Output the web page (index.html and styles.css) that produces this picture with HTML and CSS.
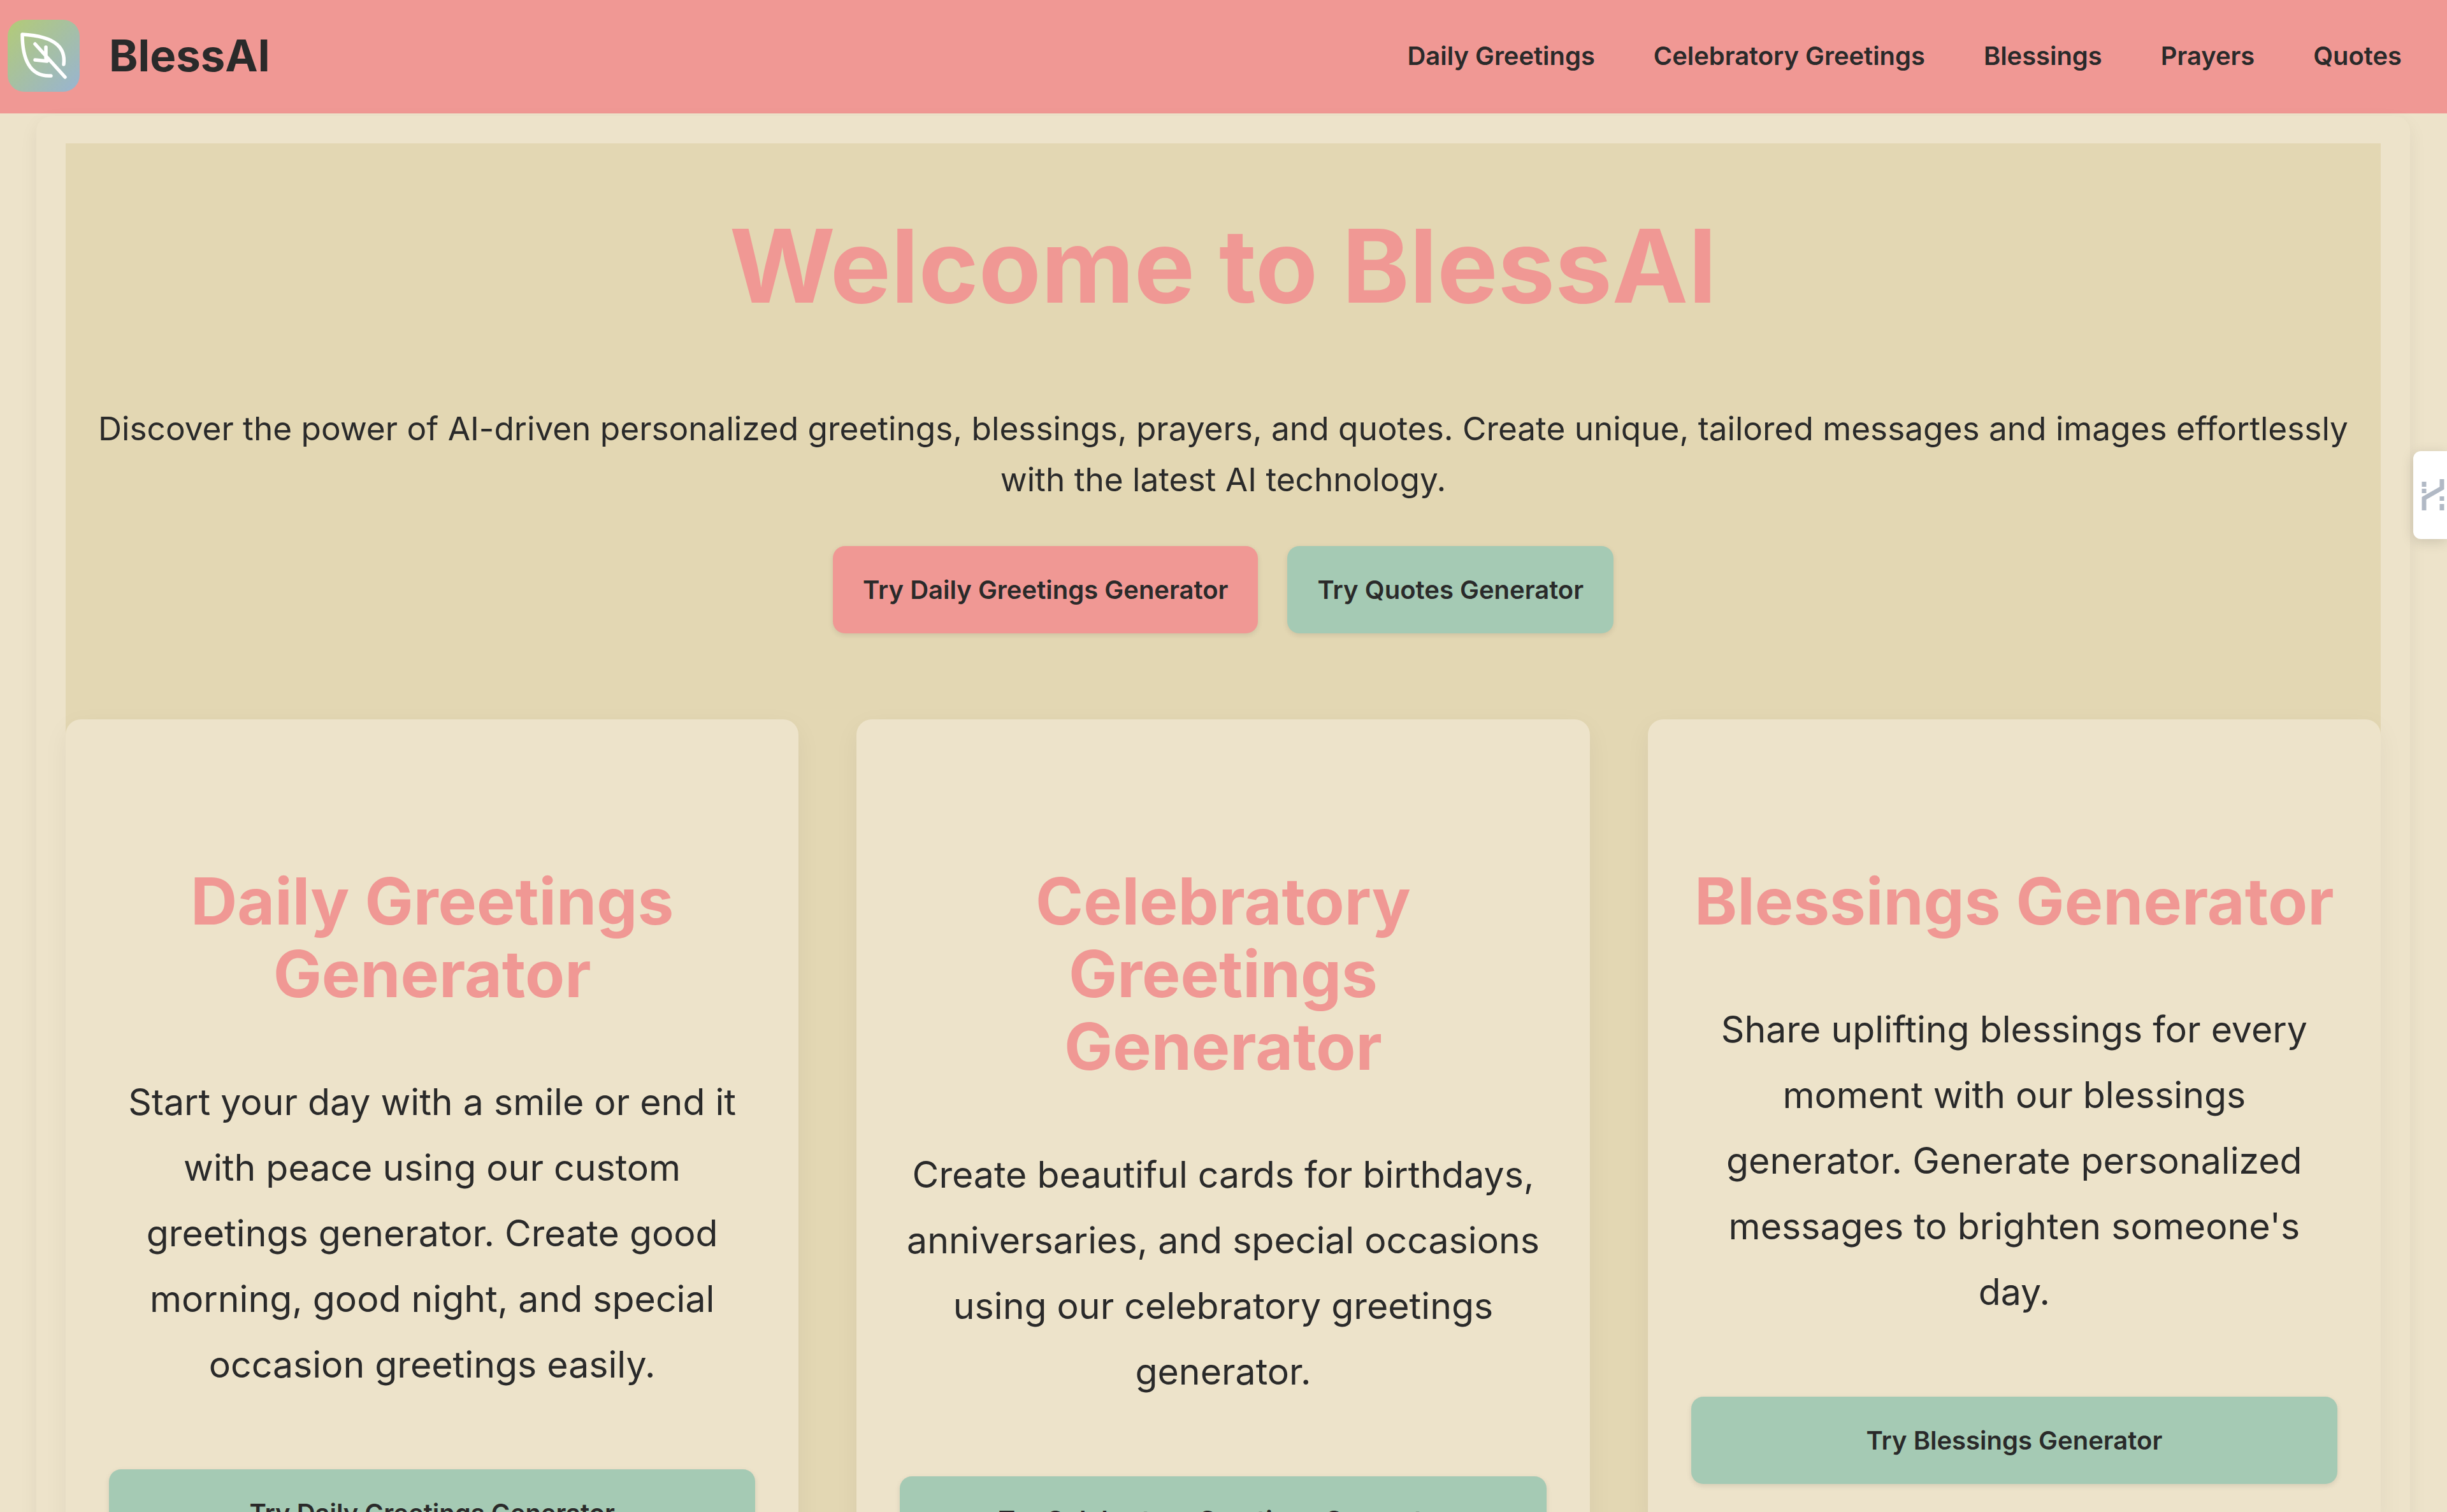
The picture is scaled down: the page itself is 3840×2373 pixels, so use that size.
FILE: index.html
```html
<!DOCTYPE html>
<html lang="en">
<head>
  <meta charset="UTF-8">
  <title>BlessAI</title>
  <link rel="stylesheet" href="styles.css">
</head>
<body>

<header class="top-bar">
  <a href="#" class="brand">
    <svg class="brand-logo" viewBox="0 0 113 113">
      <defs>
        <linearGradient id="logoFill" x1="0" y1="0" x2="1" y2="1">
          <stop offset="0" stop-color="#b3cb76"/>
          <stop offset="1" stop-color="#98b4d2"/>
        </linearGradient>
      </defs>
      <rect width="113" height="113" rx="26" fill="url(#logoFill)"/>
      <g fill="none" stroke="#fff" stroke-width="5.5" stroke-linecap="round" stroke-linejoin="round">
        <path d="M88 70C91 46 78 26 23 23C23 60 34 90 68 88"/>
        <path d="M43 38L90 90M60 43V60M43 63L62 65"/>
      </g>
    </svg>
    <span class="brand-name">BlessAI</span>
  </a>
  <nav class="top-nav">
    <a href="#">Daily Greetings</a>
    <a href="#">Celebratory Greetings</a>
    <a href="#">Blessings</a>
    <a href="#">Prayers</a>
    <a href="#">Quotes</a>
  </nav>
</header>

<main class="page">
  <div class="panel">
    <section class="hero">
      <h1>Welcome to BlessAI</h1>
      <p>Discover the power of AI-driven personalized greetings, blessings, prayers, and quotes. Create unique, tailored messages and images effortlessly with the latest AI technology.</p>
      <div class="hero-buttons">
        <a href="#" class="btn btn-pink">Try Daily Greetings Generator</a>
        <a href="#" class="btn btn-green">Try Quotes Generator</a>
      </div>
    </section>

    <section class="cards">
      <article class="card">
        <h2>Daily Greetings Generator</h2>
        <p>Start your day with a smile or end it with peace using our custom greetings generator. Create good morning, good night, and special occasion greetings easily.</p>
        <a href="#" class="btn btn-green btn-full">Try Daily Greetings Generator</a>
      </article>
      <article class="card">
        <h2>Celebratory<br>Greetings<br>Generator</h2>
        <p>Create beautiful cards for birthdays, anniversaries, and special occasions using our celebratory greetings generator.</p>
        <a href="#" class="btn btn-green btn-full">Try Celebratory Greetings Generator</a>
      </article>
      <article class="card">
        <h2>Blessings Generator</h2>
        <p>Share uplifting blessings for every moment with our blessings generator. Generate personalized messages to brighten someone's day.</p>
        <a href="#" class="btn btn-green btn-full">Try Blessings Generator</a>
      </article>
    </section>
  </div>
</main>

<!-- floating tab on the right edge -->
<div class="side-tab">
  <svg class="side-tab-icon" viewBox="0 0 40 50">
    <g fill="none" stroke="#b1b9c5" stroke-width="7">
      <path d="M4 4V12M4 15V22"/>
      <path d="M4 49V30L32 14V0"/>
      <path d="M32 27V34M32 39V49"/>
    </g>
  </svg>
</div>

</body>
</html>
```

FILE: styles.css
```css
html, body {
  margin: 0;
  height: 100%;
  overflow: hidden;
}

body {
  font-family: "Inter", "Liberation Sans", sans-serif;
  background-color: #ede3ca;
  color: #2a2a2a;
}

a {
  color: inherit;
  text-decoration: none;
}

.top-bar {
  display: flex;
  align-items: center;
  justify-content: space-between;
  height: 178px;
  box-sizing: border-box;
  padding: 0 71px 4px 12px;
  background-color: #f09894;
}

.brand {
  display: flex;
  align-items: center;
  gap: 46px;
}

.brand-logo {
  width: 113px;
  height: 113px;
}

.brand-name {
  font-size: 68.8px;
  font-weight: 700;
}

.top-nav {
  display: flex;
  gap: 92px;
  font-size: 39.9px;
  font-weight: 600;
}

.page {
  margin: 4px 58px 0 57px;
  padding: 43px 46px 0;
  border-radius: 24px;
  background-color: #ede3ca;
  box-shadow: 0 10px 30px rgba(0, 0, 0, 0.06);
}

.panel {
  background-color: #e3d7b3;
}

.hero {
  padding: 112px 46px 135px;
  text-align: center;
}

.hero h1 {
  margin: 0;
  font-size: 160px;
  line-height: 1;
  font-weight: 700;
  color: #f09894;
}

.hero p {
  margin: 135px 0 0;
  font-size: 51.3px;
  line-height: 80px;
}

.hero-buttons {
  display: flex;
  justify-content: center;
  gap: 46px;
  margin-top: 65px;
}

.btn {
  display: block;
  padding: 0 47px;
  line-height: 137px;
  font-size: 40px;
  font-weight: 600;
  border-radius: 19px;
  box-shadow: 0 3px 8px rgba(0, 0, 0, 0.1);
}

.btn-pink {
  background-color: #f09894;
}

.btn-green {
  background-color: #a5cab4;
}

.btn-full {
  margin-top: 113px;
  text-align: center;
}

.cards {
  display: grid;
  grid-template-columns: repeat(3, 1fr);
  gap: 91px;
  align-items: start;
}

.card {
  padding: 228px 68px 68px;
  border-radius: 24px;
  background-color: #ede3ca;
  text-align: center;
  box-shadow: 0 12px 40px rgba(0, 0, 0, 0.05);
}

.card h2 {
  margin: 0;
  font-size: 101.5px;
  line-height: 114px;
  font-weight: 700;
  color: #f09894;
}

.card p {
  margin: 93px 0 0;
  font-size: 57.2px;
  line-height: 103px;
}

.side-tab {
  position: fixed;
  top: 708px;
  right: 0;
  display: flex;
  align-items: center;
  width: 53px;
  height: 138px;
  border-radius: 12px 0 0 12px;
  background-color: #fff;
  box-shadow: 0 4px 20px rgba(0, 0, 0, 0.15);
  overflow: hidden;
}

.side-tab-icon {
  flex: none;
  width: 40px;
  height: 50px;
  margin-left: 13px;
}
```
